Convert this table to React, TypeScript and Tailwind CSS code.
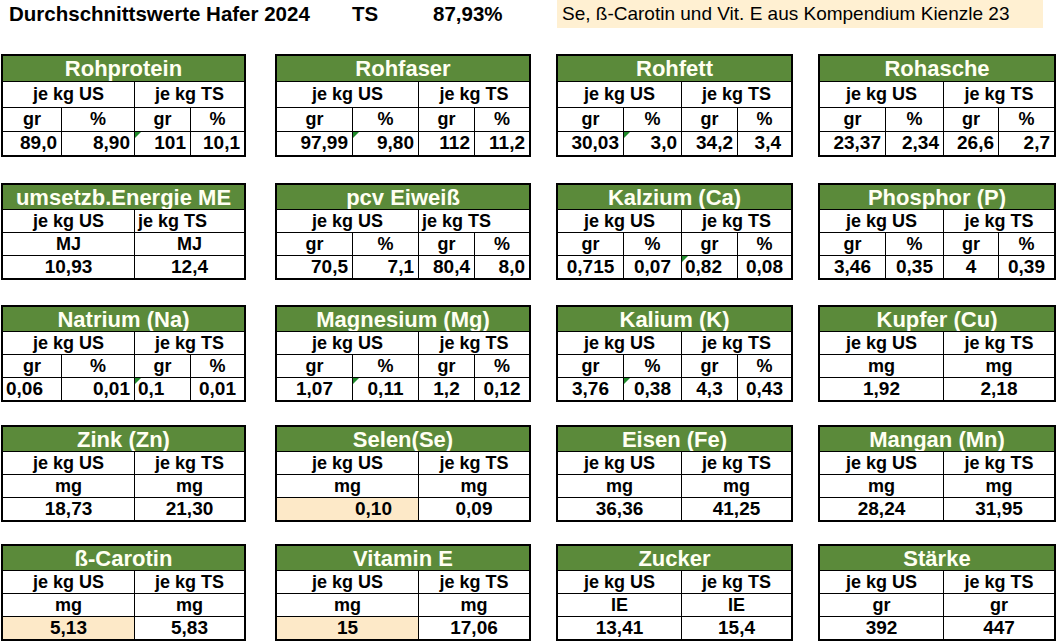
import React from "react";

type Align = "l" | "c" | "r";
type C = { t: string; a?: Align; x?: string; tri?: boolean; hl?: boolean };
type Def = {
  title: string;
  grid: string;
  four: boolean;
  tsLeft?: boolean;
  units: string[];
  data: C[];
};

const G1 = "grid-cols-[58px_73px_56px_1fr]";
const G2 = "grid-cols-[75px_66px_56px_1fr]";
const G3 = "grid-cols-[65px_58px_56px_1fr]";
const G4 = "grid-cols-[65px_58px_55px_1fr]";

const alignCls: Record<Align, string> = {
  l: "justify-start pl-[3px]",
  c: "justify-center",
  r: "justify-end pr-[4px]",
};

function Cell({
  c,
  first,
  span,
  h,
  num,
}: {
  c: C;
  first: boolean;
  span: boolean;
  h: string;
  num?: boolean;
}) {
  return (
    <div
      className={`relative flex items-center whitespace-nowrap border-t border-black ${h} ${
        first ? "" : "border-l"
      } ${span ? "col-span-2" : ""} ${alignCls[c.a ?? "c"]} ${c.x ?? ""} ${
        c.hl ? "bg-[#fde9c8]" : ""
      } ${num ? "text-[19px]" : ""}`}
    >
      {c.tri && (
        <span className="absolute left-0 top-0 h-0 w-0 border-t-[6px] border-r-[6px] border-t-[#1f8a2a] border-r-transparent" />
      )}
      {c.t}
    </div>
  );
}

function Table({ d, big, w }: { d: Def; big: boolean; w: string }) {
  const hs = big
    ? ["h-[26px]", "h-[24px]", "h-[24px]"]
    : ["h-[23px]", "h-[23px]", "h-[23px]"];
  const th = big ? "h-[25px]" : "h-[24px]";
  return (
    <div className={`${w} border-2 border-black bg-white`}>
      <div
        className={`flex items-center justify-center whitespace-nowrap bg-[#5b8a3a] text-[22px] font-bold text-[#fffff2] ${th}`}
      >
        {d.title}
      </div>
      <div className={`grid ${d.grid}`}>
        <Cell c={{ t: "je kg US", a: "c" }} first span h={hs[0]} />
        <Cell
          c={d.tsLeft ? { t: "je kg TS", a: "l", x: "pl-[1px]" } : { t: "je kg TS", a: "c" }}
          first={false}
          span
          h={hs[0]}
        />
        {d.four
          ? d.units.map((u, i) => (
              <Cell key={"u" + i} c={{ t: u, a: "c" }} first={i === 0} span={false} h={hs[1]} />
            ))
          : d.units.map((u, i) => (
              <Cell key={"u" + i} c={{ t: u, a: "c" }} first={i === 0} span h={hs[1]} />
            ))}
        {d.four
          ? d.data.map((c, i) => (
              <Cell key={"d" + i} c={c} first={i === 0} span={false} h={hs[2]} num />
            ))
          : d.data.map((c, i) => (
              <Cell key={"d" + i} c={c} first={i === 0} span h={hs[2]} num />
            ))}
      </div>
    </div>
  );
}

const R = (t: string, tri?: boolean): C => ({ t, a: "r", tri });
const Cc = (t: string, tri?: boolean, hl?: boolean): C => ({ t, a: "c", tri, hl });
const L = (t: string, tri?: boolean): C => ({ t, a: "l", tri });

const u4 = ["gr", "%", "gr", "%"];

const rows: { defs: Def[]; big: boolean }[] = [
  {
    big: true,
    defs: [
      { title: "Rohprotein", grid: G1, four: true, units: u4, data: [R("89,0"), R("8,90"), R("101", true), R("10,1")] },
      { title: "Rohfaser", grid: G2, four: true, units: u4, data: [R("97,99"), R("9,80", true), R("112"), R("11,2")] },
      { title: "Rohfett", grid: G3, four: true, units: u4, data: [R("30,03"), R("3,0", true), R("34,2"), { t: "3,4", a: "r", x: "pr-[10px]" }] },
      { title: "Rohasche", grid: G4, four: true, units: u4, data: [R("23,37"), R("2,34"), R("26,6"), R("2,7")] },
    ],
  },
  {
    big: false,
    defs: [
      { title: "umsetzb.Energie ME", grid: G1, four: false, tsLeft: true, units: ["MJ", "MJ"], data: [Cc("10,93"), Cc("12,4")] },
      { title: "pcv Eiweiß", grid: G2, four: true, tsLeft: true, units: u4, data: [R("70,5"), R("7,1"), R("80,4"), R("8,0")] },
      { title: "Kalzium (Ca)", grid: G3, four: true, units: u4, data: [Cc("0,715"), Cc("0,07"), L("0,82", true), Cc("0,08")] },
      { title: "Phosphor (P)", grid: G4, four: true, units: u4, data: [Cc("3,46"), Cc("0,35"), Cc("4"), Cc("0,39")] },
    ],
  },
  {
    big: false,
    defs: [
      { title: "Natrium (Na)", grid: G1, four: true, units: u4, data: [L("0,06"), R("0,01"), L("0,1", true), Cc("0,01")] },
      { title: "Magnesium (Mg)", grid: G2, four: true, units: u4, data: [Cc("1,07"), Cc("0,11", true), Cc("1,2"), Cc("0,12")] },
      { title: "Kalium (K)", grid: G3, four: true, units: u4, data: [Cc("3,76"), Cc("0,38", true), Cc("4,3"), Cc("0,43")] },
      { title: "Kupfer (Cu)", grid: G4, four: false, units: ["mg", "mg"], data: [Cc("1,92"), Cc("2,18")] },
    ],
  },
  {
    big: false,
    defs: [
      { title: "Zink (Zn)", grid: G1, four: false, units: ["mg", "mg"], data: [Cc("18,73"), Cc("21,30")] },
      { title: "Selen(Se)", grid: G2, four: false, units: ["mg", "mg"], data: [{ t: "0,10", a: "r", x: "pr-[26px]", hl: true }, Cc("0,09")] },
      { title: "Eisen (Fe)", grid: G3, four: false, units: ["mg", "mg"], data: [Cc("36,36"), Cc("41,25")] },
      { title: "Mangan (Mn)", grid: G4, four: false, units: ["mg", "mg"], data: [Cc("28,24"), Cc("31,95")] },
    ],
  },
  {
    big: false,
    defs: [
      { title: "ß-Carotin", grid: G1, four: false, units: ["mg", "mg"], data: [Cc("5,13", false, true), Cc("5,83")] },
      { title: "Vitamin E", grid: G2, four: false, units: ["mg", "mg"], data: [Cc("15", false, true), Cc("17,06")] },
      { title: "Zucker", grid: G3, four: false, units: ["IE", "IE"], data: [Cc("13,41"), Cc("15,4")] },
      { title: "Stärke", grid: G4, four: false, units: ["gr", "gr"], data: [Cc("392"), Cc("447")] },
    ],
  },
];

const widths = ["w-[245px]", "w-[256px]", "w-[237px]", "w-[238px]"];
const rowMargins = ["mt-[26px]", "mt-[26px]", "mt-[25px]", "mt-[23px]", "mt-[22px]"];

export default function App() {
  return (
    <div className="h-[643px] w-[1061px] overflow-hidden bg-white font-['Liberation_Sans',Arial,sans-serif] text-[18px] font-bold text-black">
      <div className="flex h-[28px] items-center">
        <div className="ml-[9px] w-[343px] whitespace-nowrap text-[20.5px]">Durchschnittswerte Hafer 2024</div>
        <div className="w-[81px] text-[20.5px]">TS</div>
        <div className="w-[124px] text-[20.5px]">87,93%</div>
        <div className="flex h-[28px] w-[486px] items-center whitespace-nowrap bg-[#fff0d2] pl-[5px] text-[19px] font-normal">
          Se, ß-Carotin und Vit. E aus Kompendium Kienzle 23
        </div>
      </div>
      {rows.map((r, ri) => (
        <div key={ri} className={`ml-[1px] flex ${rowMargins[ri]}`}>
          {r.defs.map((d, di) => (
            <div key={di} className={di === 0 ? "" : di === 1 ? "ml-[29px]" : "ml-[25px]"}>
              <Table d={d} big={r.big} w={widths[di]} />
            </div>
          ))}
        </div>
      ))}
    </div>
  );
}
